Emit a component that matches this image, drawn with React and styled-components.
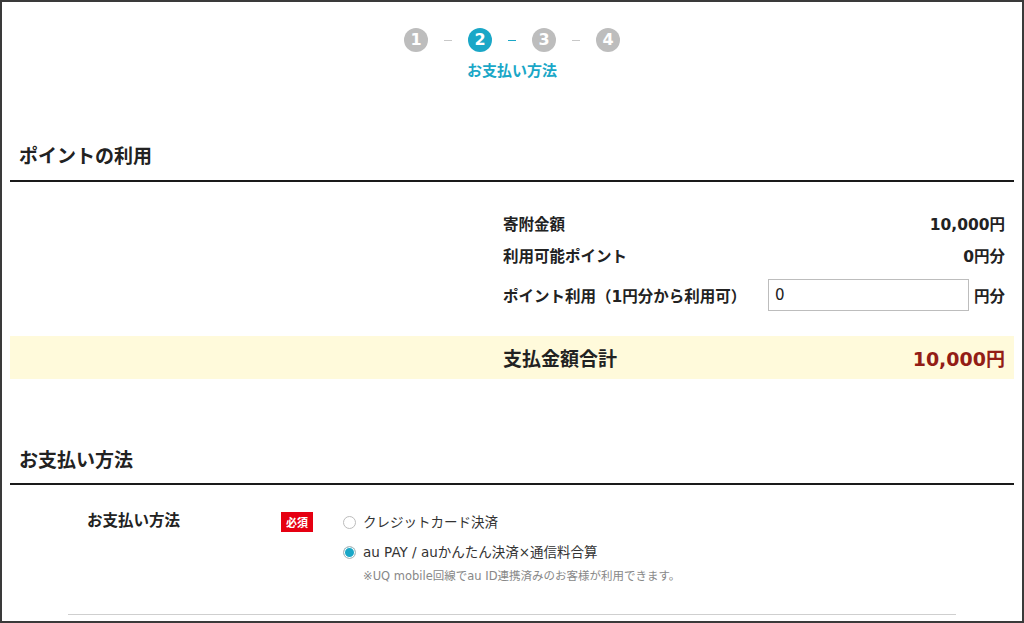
import React from "react";
import styled, { createGlobalStyle } from "styled-components";

const TEAL = "#1aa7c7";

const steps = [1, 2, 3, 4];
const current = 2;

function App() {
  return (
    <Frame>
      <GlobalStyle />
      <StepArea>
        <StepList>
          {steps.map((n, i) => (
            <React.Fragment key={n}>
              {i > 0 && <StepDash active={n - 1 === current} />}
              <StepCircle active={n === current}>{n}</StepCircle>
            </React.Fragment>
          ))}
        </StepList>
        <StepLabel>お支払い方法</StepLabel>
      </StepArea>

      <Content>
        <SectionHeading>ポイントの利用</SectionHeading>
        <PointTable>
          <PointRow>
            <RowLabel>寄附金額</RowLabel>
            <RowValue>10,000円</RowValue>
          </PointRow>
          <PointRow>
            <RowLabel>利用可能ポイント</RowLabel>
            <RowValue>0円分</RowValue>
          </PointRow>
          <InputRow>
            <RowLabel>ポイント利用（1円分から利用可）</RowLabel>
            <PointInput defaultValue="0" />
            <RowValue>円分</RowValue>
          </InputRow>
        </PointTable>
        <TotalBar>
          <TotalInner>
            <TotalLabel>支払金額合計</TotalLabel>
            <TotalValue>10,000円</TotalValue>
          </TotalInner>
        </TotalBar>

        <SectionHeading second>お支払い方法</SectionHeading>
        <FormBlock>
          <FormLabel>お支払い方法</FormLabel>
          <Required>必須</Required>
          <Options>
            <Option>
              <Radio />
              クレジットカード決済
            </Option>
            <Option second>
              <Radio checked />
              au PAY / auかんたん決済×通信料合算
            </Option>
            <Note>※UQ mobile回線でau ID連携済みのお客様が利用できます。</Note>
          </Options>
        </FormBlock>
      </Content>
    </Frame>
  );
}

export default App;

const GlobalStyle = createGlobalStyle`
  body {
    margin: 0;
    background: #fff;
    font-family: "DejaVu Sans", "Noto Sans CJK JP", sans-serif;
    color: #222;
  }
`;

const Frame = styled.div`
  width: 1024px;
  height: 623px;
  box-sizing: border-box;
  border: 2px solid #3a3a3a;
  overflow: hidden;
  background: #fff;
`;

const StepArea = styled.div`
  display: flex;
  flex-direction: column;
  align-items: center;
  padding-top: 26px;
`;

const StepList = styled.div`
  display: flex;
  align-items: center;
`;

const StepCircle = styled.div`
  width: 24px;
  height: 24px;
  border-radius: 50%;
  background: ${(p) => (p.active ? TEAL : "#bdbdbd")};
  color: #fff;
  font-weight: 700;
  font-size: 16px;
  line-height: 24px;
  text-align: center;
`;

const StepDash = styled.div`
  width: 8px;
  height: 1px;
  margin: 0 16px;
  background: ${(p) => (p.active ? TEAL : "#c8c8c8")};
`;

const StepLabel = styled.div`
  margin-top: 9px;
  color: ${TEAL};
  font-weight: 700;
  font-size: 15px;
  line-height: 20px;
`;

const Content = styled.div`
  padding: 0 8px;
`;

const SectionHeading = styled.h2`
  margin: ${(p) => (p.second ? "69px" : "63px")} 0 0;
  padding: 0 0 ${(p) => (p.second ? "11px" : "12px")} 9px;
  font-size: 19px;
  line-height: 24px;
  font-weight: 700;
  border-bottom: 2px solid #1a1a1a;
`;

const PointTable = styled.div`
  width: 502px;
  margin: 0 9px 0 auto;
  padding-top: 25px;
`;

const PointRow = styled.div`
  display: flex;
  justify-content: space-between;
  align-items: center;
  height: 32px;
`;

const InputRow = styled.div`
  display: grid;
  grid-template-columns: 265px 201px 1fr;
  align-items: center;
  height: 48px;
  & > *:last-child {
    text-align: right;
  }
`;

const RowLabel = styled.div`
  font-size: 15.5px;
  font-weight: 700;
  white-space: nowrap;
`;

const RowValue = styled.div`
  font-size: 15.5px;
  font-weight: 700;
`;

const PointInput = styled.input`
  box-sizing: border-box;
  width: 201px;
  height: 32px;
  border: 1px solid #bdbdbd;
  padding: 0 6px;
  font-family: "DejaVu Sans", sans-serif;
  font-size: 15px;
  color: #222;
  outline: none;
`;

const TotalBar = styled.div`
  margin-top: 17px;
  height: 43px;
  background: #fffadb;
  display: flex;
  align-items: center;
`;

const TotalInner = styled.div`
  width: 502px;
  margin: 0 9px 0 auto;
  display: flex;
  justify-content: space-between;
  align-items: center;
`;

const TotalLabel = styled.div`
  font-size: 19px;
  font-weight: 700;
`;

const TotalValue = styled.div`
  font-size: 19px;
  font-weight: 700;
  color: #931d16;
`;

const FormBlock = styled.div`
  margin: 0 58px;
  padding: 26px 0 30px 19px;
  border-bottom: 1px solid #cfcfcf;
  display: flex;
  align-items: flex-start;
`;

const FormLabel = styled.div`
  width: 194px;
  font-size: 15.5px;
  line-height: 20px;
  font-weight: 700;
`;

const Required = styled.span`
  width: 32px;
  height: 20px;
  margin-top: 1px;
  background: #e60012;
  color: #fff;
  font-family: "Noto Sans CJK JP", sans-serif;
  font-size: 11px;
  font-weight: 700;
  line-height: 20px;
  text-align: center;
`;

const Options = styled.div`
  margin-left: 30px;
  display: flex;
  flex-direction: column;
`;

const Option = styled.label`
  display: flex;
  align-items: center;
  gap: 7px;
  margin-top: ${(p) => (p.second ? "8px" : "0")};
  font-size: 13.5px;
  line-height: 22px;
  color: #333;
`;

const Radio = styled.span`
  box-sizing: border-box;
  width: 13px;
  height: 13px;
  border-radius: 50%;
  border: 1px solid #bcbcbc;
  background: ${(p) => (p.checked ? TEAL : "#fff")};
  box-shadow: ${(p) => (p.checked ? "inset 0 0 0 1px #fff" : "none")};
`;

const Note = styled.div`
  margin-top: 5px;
  padding-left: 20px;
  font-size: 11.5px;
  line-height: 16px;
  color: #888;
`;
